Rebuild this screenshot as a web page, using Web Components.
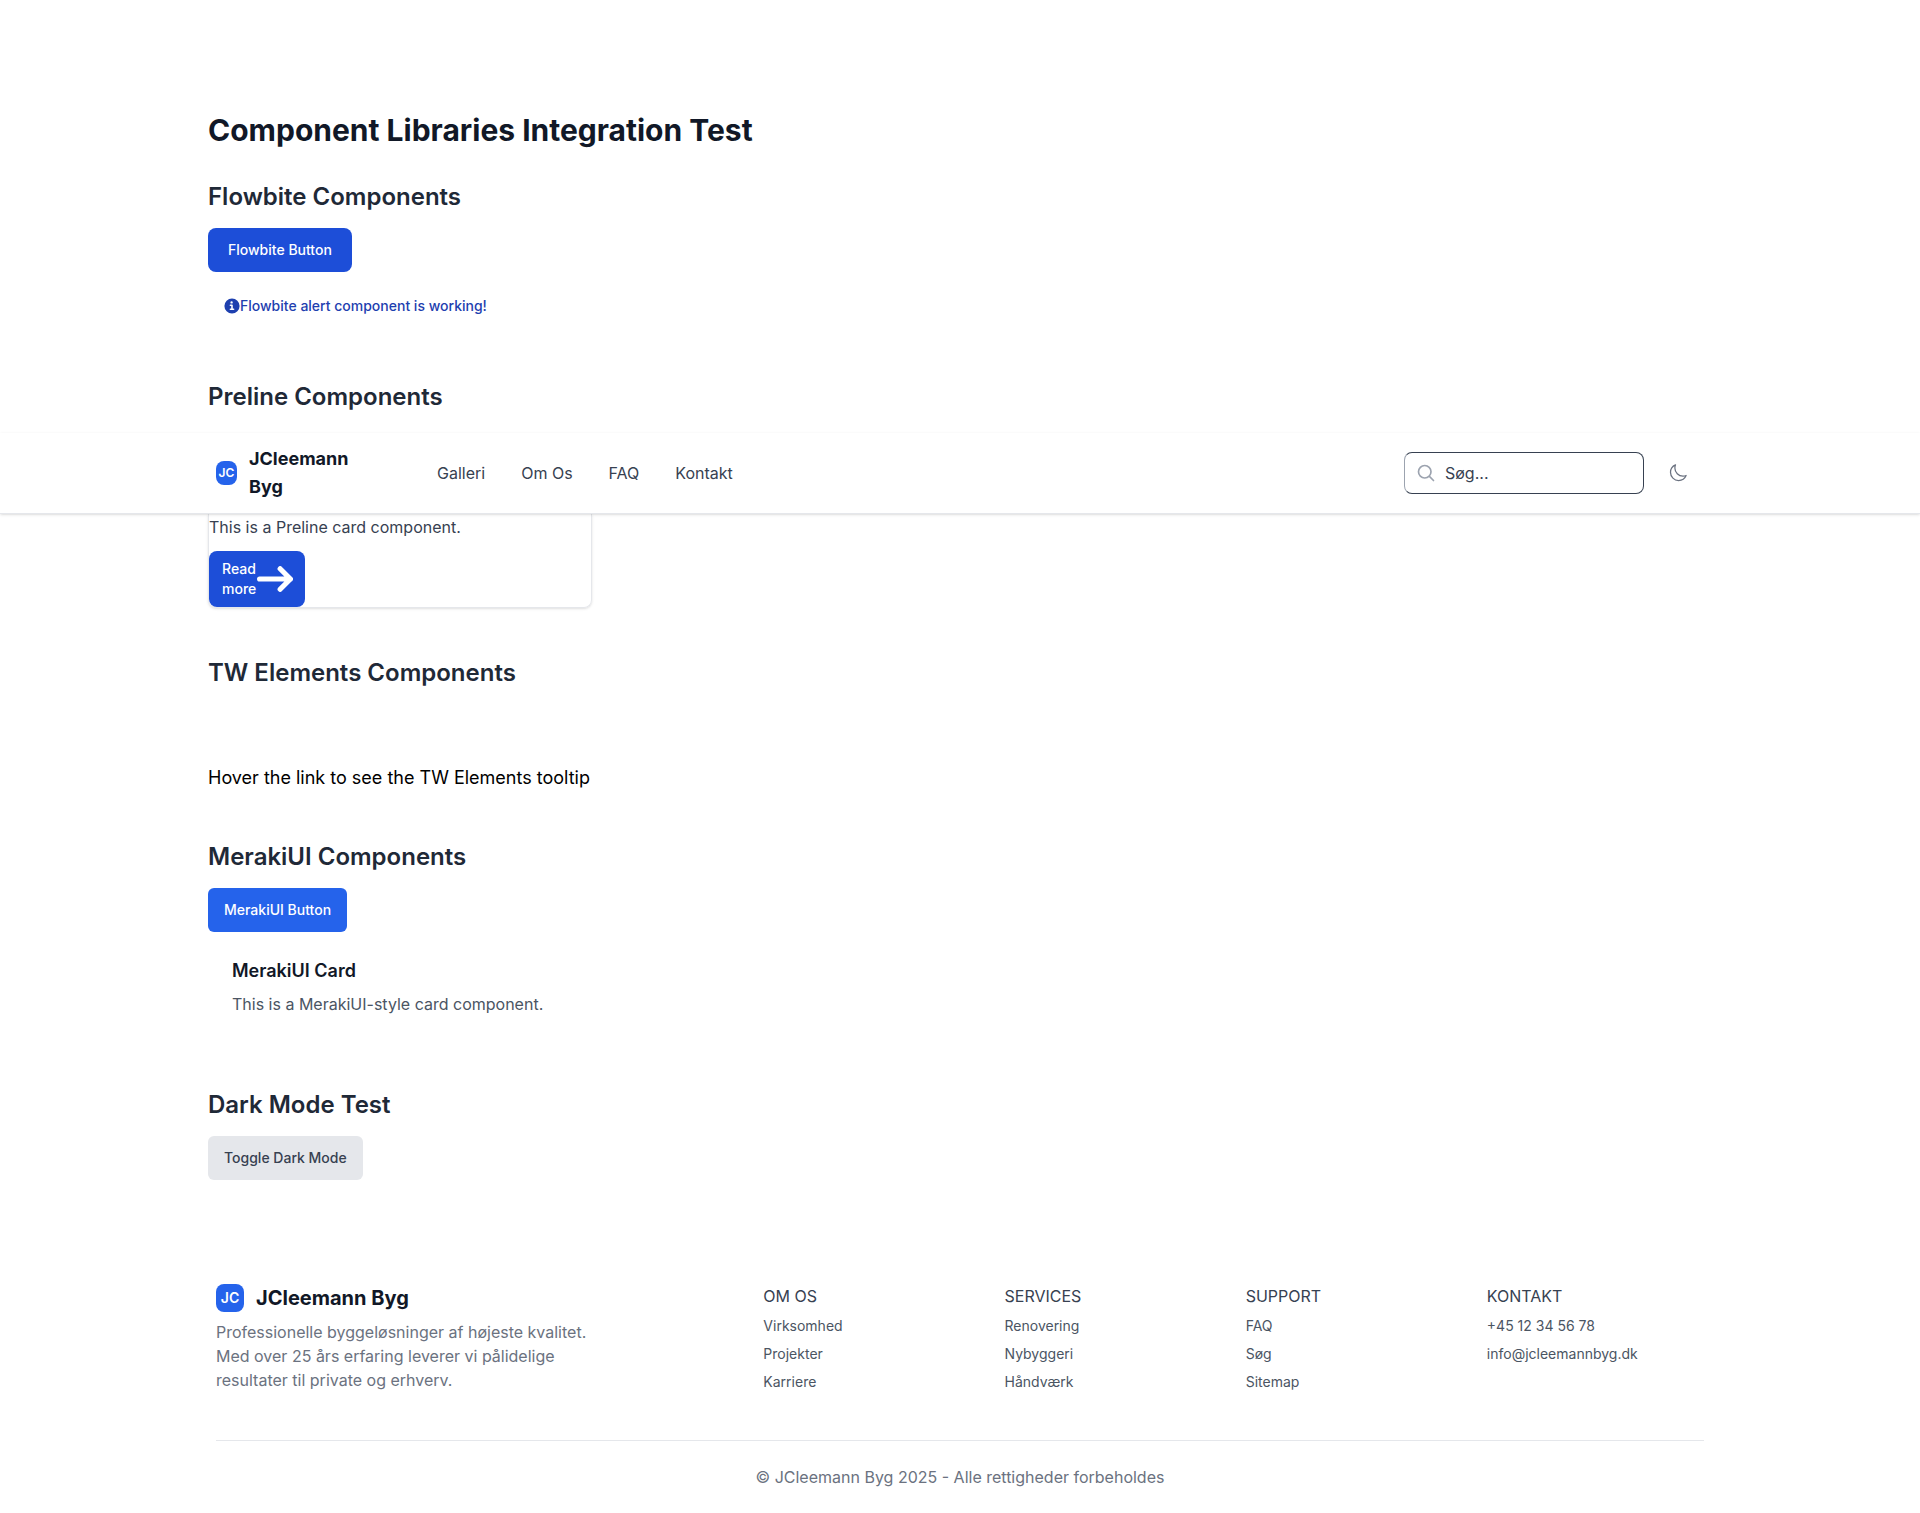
<!DOCTYPE html>
<html lang="da">
<head>
<meta charset="utf-8">
<title>Component Libraries Integration Test</title>
<style>
  body { margin: 0; background: #fff; font-family: Inter, "Liberation Sans", sans-serif; font-size: 18px; line-height: 28px; color: #000; }
  main { max-width: 1504px; margin: 0 auto; padding: 0 16px; display: flow-root; }
  .top { padding-top: 112px; }
  h1 { margin: 0 0 32px; font-size: 30px; line-height: 36px; font-weight: 700; color: #111827; }
</style>
</head>
<body>
<main class="top">
  <h1>Component Libraries Integration Test</h1>
  <demo-section heading="Flowbite Components">
    <demo-button variant="flowbite">Flowbite Button</demo-button>
    <demo-alert>Flowbite alert component is working!</demo-alert>
  </demo-section>
  <demo-section heading="Preline Components" joined></demo-section>
</main>
<site-header></site-header>
<main>
  <preline-card>This is a Preline card component.</preline-card>
  <demo-section heading="TW Elements Components">
    <tooltip-note>Hover the link to see the TW Elements tooltip</tooltip-note>
  </demo-section>
  <demo-section heading="MerakiUI Components">
    <demo-button variant="meraki">MerakiUI Button</demo-button>
    <meraki-card heading="MerakiUI Card">This is a MerakiUI-style card component.</meraki-card>
  </demo-section>
  <demo-section heading="Dark Mode Test">
    <demo-button variant="neutral">Toggle Dark Mode</demo-button>
  </demo-section>
</main>
<site-footer></site-footer>

<script>
const define = (name, html, setup) => {
  const template = document.createElement('template');
  template.innerHTML = html;
  customElements.define(name, class extends HTMLElement {
    constructor() {
      super();
      this.attachShadow({ mode: 'open' }).append(template.content.cloneNode(true));
    }
    connectedCallback() { if (setup) setup(this, this.shadowRoot); }
  });
};

define('demo-section', `
<style>
  :host { display: block; margin-bottom: 48px; }
  :host([joined]) { margin-bottom: 20px; }
  h2 { margin: 0 0 15px; padding-top: 1px; font-size: 24px; line-height: 32px; font-weight: 600; color: #1f2937; }
</style>
<section><h2></h2><slot></slot></section>`,
(host, root) => { root.querySelector('h2').textContent = host.getAttribute('heading'); });

define('demo-button', `
<style>
  :host { display: flex; }
  button { min-height: 44px; padding: 0 16px; border: 0; border-radius: 6px; font: 500 14px/20px Inter, sans-serif; color: #fff; background: #2563eb; cursor: pointer; }
  :host([variant="flowbite"]) button { padding: 0 20px; border-radius: 8px; background: #1d4ed8; }
  :host([variant="neutral"]) button { background: #e5e7eb; color: #374151; }
</style>
<button type="button"><slot></slot></button>`);

define('demo-alert', `
<style>
  :host { display: block; margin-top: 8px; }
  div { display: flex; align-items: center; padding: 16px; font-size: 14px; line-height: 20px; font-weight: 500; color: #1e40af; }
  svg { width: 16px; height: 16px; flex: none; }
</style>
<div role="alert"><svg viewBox="0 0 20 20" fill="currentColor" aria-hidden="true"><path d="M10 .5a9.5 9.5 0 1 0 9.5 9.5A9.510 9.510 0 0 0 10 .5ZM9.500 4a1.500 1.500 0 1 1 0 3 1.500 1.500 0 0 1 0-3ZM12 15H8a1 1 0 0 1 0-2h1v-3H8a1 1 0 0 1 0-2h2a1 1 0 0 1 1 1v4h1a1 1 0 0 1 0 2Z"/></svg><span><slot></slot></span></div>`);

define('brand-mark', `
<style>
  :host { display: flex; flex: none; align-items: center; justify-content: center; width: 28px; height: 28px; border-radius: 8px; background: #2563eb; color: #fff; font-size: 14px; line-height: 20px; font-weight: 600; }
  :host([compact]) { width: 21px; height: 24px; font-size: 12px; line-height: 16px; }
</style><span>JC</span>`);

define('site-header', `
<style>
  :host { display: block; position: relative; z-index: 1; background: #fff; box-shadow: 0 1px 3px rgba(0,0,0,.1), 0 1px 2px -1px rgba(0,0,0,.1); border-bottom: 1px solid #e5e7eb; }
  header { max-width: 1488px; margin: 0 auto; padding: 12px 24px; display: flex; align-items: center; }
  a { color: inherit; text-decoration: none; }
  .brand { display: flex; align-items: center; gap: 12px; width: 185px; padding-right: 36px; box-sizing: border-box; font-size: 18px; line-height: 28px; font-weight: 700; color: #111827; }
  nav { display: flex; gap: 36px; margin-left: 36px; flex: 1; font-size: 16px; line-height: 24px; color: #374151; }
  label { display: flex; align-items: center; gap: 9px; box-sizing: border-box; width: 240px; height: 42px; padding: 0 11px; border: 1px solid #374151; border-left-color: #9ca3af; border-radius: 8px; }
  label svg { width: 20px; height: 20px; flex: none; color: #9ca3af; }
  input { min-width: 0; flex: 1; border: 0; padding: 0; outline: 0; background: none; font: 16px/24px Inter, sans-serif; color: #374151; }
  input::placeholder { color: #374151; opacity: 1; }
  button { display: flex; align-items: center; justify-content: center; width: 44px; height: 44px; margin: 0 4px 0 12px; padding: 0; border: 0; background: none; color: #6b7280; }
  button svg { width: 20px; height: 20px; }
</style>
<header>
  <a class="brand" href="#"><brand-mark compact></brand-mark><span>JCleemann Byg</span></a>
  <nav><a href="#">Galleri</a><a href="#">Om Os</a><a href="#">FAQ</a><a href="#">Kontakt</a></nav>
  <label><svg viewBox="0 0 24 24" fill="none" stroke="currentColor" stroke-width="2" stroke-linecap="round" stroke-linejoin="round" aria-hidden="true"><path d="m21 21-5.197-5.197m0 0A7.500 7.500 0 1 0 5.196 5.196a7.500 7.500 0 0 0 10.607 10.607Z"/></svg><input type="text" aria-label="Søg" placeholder="Søg..."></label>
  <button type="button" aria-label="Skift tema"><svg viewBox="0 0 24 24" fill="none" stroke="currentColor" stroke-width="1.500" stroke-linecap="round" stroke-linejoin="round"><path d="M21.752 15.002A9.720 9.720 0 0 1 18 15.750c-5.385 0-9.750-4.365-9.750-9.750 0-1.330.266-2.597.748-3.752A9.753 9.753 0 0 0 3 11.250C3 16.635 7.365 21 12.750 21a9.753 9.753 0 0 0 9.002-5.998Z"/></svg></button>
</header>`);

define('preline-card', `
<style>
  :host { display: block; margin-bottom: 48px; }
  article { box-sizing: border-box; max-width: 384px; border: 1px solid #e5e7eb; border-top: 0; border-radius: 0 0 8px 8px; box-shadow: 0 1px 3px rgba(0,0,0,.1), 0 1px 2px -1px rgba(0,0,0,.1); padding-top: 1px; }
  p { margin: 0 0 12px; font-size: 16px; line-height: 24px; color: #374151; }
  button { display: flex; align-items: center; width: 96px; padding: 8px 12px 8px 13px; border: 0; border-radius: 8px; background: #1d4ed8; color: #fff; font: 500 14px/20px Inter, sans-serif; text-align: left; }
  svg { width: 36px; height: 26px; flex: none; }
</style>
<article><p><slot></slot></p><button type="button"><span>Read more</span><svg viewBox="0 0 14 10" fill="none" stroke="currentColor" stroke-width="2" stroke-linecap="round" stroke-linejoin="round" aria-hidden="true"><path d="M1 5h12m0 0L9 1m4 4L9 9"/></svg></button></article>`);

define('tooltip-note', `
<style>:host { display: block; padding-top: 60px; } p { margin: 0; font-size: 18px; line-height: 28px; }</style>
<p><slot></slot></p>`);

define('meraki-card', `
<style>
  :host { display: block; padding: 24px; }
  h3 { margin: 0 0 7px; padding-top: 1px; font-size: 18px; line-height: 28px; font-weight: 600; color: #111827; }
  p { margin: 0; font-size: 16px; line-height: 24px; color: #4b5563; }
</style>
<h3></h3><p><slot></slot></p>`,
(host, root) => { root.querySelector('h3').textContent = host.getAttribute('heading'); });

define('footer-links', `
<style>
  :host { display: block; }
  h3 { margin: 0 0 8px; font-size: 16px; line-height: 24px; font-weight: 400; color: #374151; }
  div { display: flex; flex-direction: column; align-items: flex-start; gap: 8px; font-size: 14px; line-height: 20px; color: #4b5563; }
  ::slotted(a) { color: inherit; text-decoration: none; }
</style>
<h3></h3><div><slot></slot></div>`,
(host, root) => { root.querySelector('h3').textContent = host.getAttribute('heading'); });

define('site-footer', `
<style>
  :host { display: block; padding-top: 56px; }
  footer { max-width: 1488px; margin: 0 auto; padding: 0 24px; }
  .cols { display: grid; grid-template-columns: 241fr repeat(4, 100fr); gap: 24px; padding-bottom: 48px; border-bottom: 1px solid #e5e7eb; }
  .brand { display: flex; width: fit-content; align-items: center; gap: 12px; font-size: 20px; line-height: 28px; font-weight: 700; color: #111827; text-decoration: none; }
  p { margin: 8px 0 0; max-width: 384px; font-size: 16px; line-height: 24px; color: #6b7280; }
  .legal { margin: 0; max-width: none; padding: 24px 0; text-align: center; }
</style>
<footer>
  <div class="cols">
    <div><a class="brand" href="#"><brand-mark></brand-mark><span>JCleemann Byg</span></a>
      <p>Professionelle byggeløsninger af højeste kvalitet. Med over 25 års erfaring leverer vi pålidelige resultater til private og erhverv.</p></div>
    <footer-links heading="OM OS"><a href="#">Virksomhed</a><a href="#">Projekter</a><a href="#">Karriere</a></footer-links>
    <footer-links heading="SERVICES"><a href="#">Renovering</a><a href="#">Nybyggeri</a><a href="#">Håndværk</a></footer-links>
    <footer-links heading="SUPPORT"><a href="#">FAQ</a><a href="#">Søg</a><a href="#">Sitemap</a></footer-links>
    <footer-links heading="KONTAKT"><a href="#">+45 12 34 56 78</a><a href="#">info@jcleemannbyg.dk</a></footer-links>
  </div>
  <p class="legal">© JCleemann Byg 2025 - Alle rettigheder forbeholdes</p>
</footer>`);
</script>
</body>
</html>
